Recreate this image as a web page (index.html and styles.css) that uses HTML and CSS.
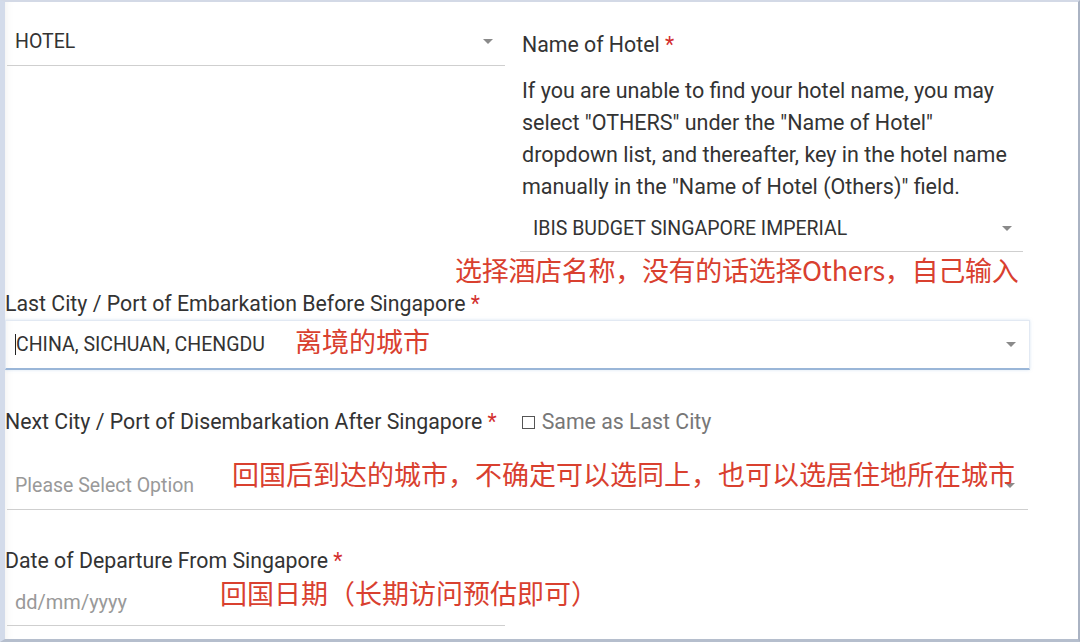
FILE: index.html
```html
<!DOCTYPE html>
<html>
<head>
<meta charset="utf-8">
<link rel="stylesheet" href="styles.css">
</head>
<body>
<div class="frame">
  <div class="row-hotel">
    <div class="col-left">
      <div class="select select-hotel">
        <span class="value">HOTEL</span>
        <span class="arrow"></span>
      </div>
    </div>
    <div class="col-right">
      <div class="label label-hotel">Name of Hotel <span class="req">*</span></div>
      <p class="hint">If you are unable to find your hotel name, you may<br>select "OTHERS" under the "Name of Hotel"<br>dropdown list, and thereafter, key in the hotel name<br>manually in the "Name of Hotel (Others)" field.</p>
      <div class="select select-ibis">
        <span class="value">IBIS BUDGET SINGAPORE IMPERIAL</span>
        <span class="arrow"></span>
      </div>
    </div>
  </div>
  <div class="note note-hotel">选择酒店名称，没有的话选择Others，自己输入</div>

  <div class="label label-last">Last City / Port of Embarkation Before Singapore <span class="req">*</span></div>
  <div class="input-focus">
    <span class="caret"></span>
    <span class="value">CHINA, SICHUAN, CHENGDU</span>
    <span class="note note-last">离境的城市</span>
    <span class="arrow"></span>
  </div>

  <div class="label-row">
    <div class="label">Next City / Port of Disembarkation After Singapore <span class="req">*</span></div>
    <label class="check"><span class="box"></span>Same as Last City</label>
  </div>
  <div class="select select-next">
    <span class="placeholder">Please Select Option</span>
    <span class="note note-next">回国后到达的城市，不确定可以选同上，也可以选居住地所在城市</span>
    <span class="arrow"></span>
  </div>

  <div class="label label-date">Date of Departure From Singapore <span class="req">*</span></div>
  <div class="select select-date">
    <span class="placeholder">dd/mm/yyyy</span>
    <span class="note note-date">回国日期（长期访问预估即可）</span>
  </div>
</div>
</body>
</html>
```

FILE: styles.css
```css
html, body {
  margin: 0;
  padding: 0;
  background: #ffffff;
}

.frame {
  box-sizing: border-box;
  width: 1080px;
  height: 642px;
  border-top: 2px solid #d3d9e6;
  border-left: 5px solid #d3dbea;
  border-right: 2px solid #aab3c3;
  border-bottom: 3px solid #b5becd;
  background: #ffffff;
  font-family: Roboto, "Noto Sans CJK SC", sans-serif;
  color: #333333;
  overflow: hidden;
  box-shadow: inset 8px 0 10px -8px rgba(0,0,0,0.08);
}

.row-hotel {
  display: flex;
  align-items: flex-start;
}

.col-left {
  width: 498px;
  margin-left: 2px;
}

.col-right {
  width: 503px;
  margin-left: 15px;
}

.select {
  position: relative;
  box-sizing: content-box;
  display: flex;
  align-items: center;
  height: 34px;
  padding-bottom: 7px;
  border-bottom: 1px solid #cfcfcf;
  font-size: 19.5px;
  color: #333333;
  white-space: nowrap;
}

.select-hotel {
  margin-top: 22px;
  padding-left: 8px;
  padding-right: 12px;
}

.arrow {
  margin-left: auto;
  width: 0;
  height: 0;
  border-left: 5px solid transparent;
  border-right: 5px solid transparent;
  border-top: 5px solid #8a8a8a;
}

.label {
  font-size: 21.3px;
  line-height: 26px;
  color: #333333;
  white-space: nowrap;
}

.req {
  color: #d32f2f;
}

.label-hotel {
  margin-top: 30px;
  padding-left: 2px;
}

.hint {
  margin: 17px 0 0 0;
  padding-left: 2px;
  font-size: 21.5px;
  line-height: 32px;
  color: #333333;
  white-space: nowrap;
}

.select-ibis {
  margin-top: 8px;
  padding-left: 13px;
  padding-right: 11px;
  height: 34px;
  padding-bottom: 6px;
}

.note {
  font-family: "Noto Sans CJK SC", sans-serif;
  font-size: 27px;
  line-height: 30px;
  color: #d9402f;
  white-space: nowrap;
}

.note-hotel {
  margin-top: 3px;
  padding-left: 450px;
  letter-spacing: -0.3px;
}

.label-last {
  margin-top: 6px;
}

.input-focus {
  position: relative;
  box-sizing: border-box;
  display: flex;
  align-items: center;
  margin-top: 3px;
  width: 1025px;
  height: 50px;
  padding-left: 9px;
  padding-right: 13px;
  border: 1px solid #e2e9f3;
  border-bottom: 2px solid #9ab6d8;
  box-shadow: 0 0 3px rgba(150, 180, 220, 0.35);
  font-size: 19.5px;
  color: #333333;
}

.caret {
  width: 1px;
  height: 21px;
  background: #222222;
}

.note-last {
  position: absolute;
  left: 289px;
  top: 5px;
}

.label-row {
  display: flex;
  align-items: center;
  margin-top: 39px;
}

.check {
  display: flex;
  align-items: center;
  margin-left: 25px;
  font-size: 21.3px;
  line-height: 26px;
  color: #777777;
}

.box {
  box-sizing: border-box;
  width: 13px;
  height: 13px;
  border: 1px solid #555555;
  margin-right: 7px;
}

.placeholder {
  color: #999999;
}

.select-next {
  margin-top: 33px;
  margin-left: 2px;
  width: 1000px;
  padding-left: 8px;
  padding-right: 13px;
}

.note-next {
  position: absolute;
  left: 225px;
  top: -9px;
}

.label-date {
  margin-top: 38px;
}

.select-date {
  margin-top: 11px;
  margin-left: 2px;
  width: 490px;
  padding-left: 8px;
  padding-bottom: 6px;
  font-size: 20px;
}

.note-date {
  position: absolute;
  left: 213px;
  top: -7px;
}
```
